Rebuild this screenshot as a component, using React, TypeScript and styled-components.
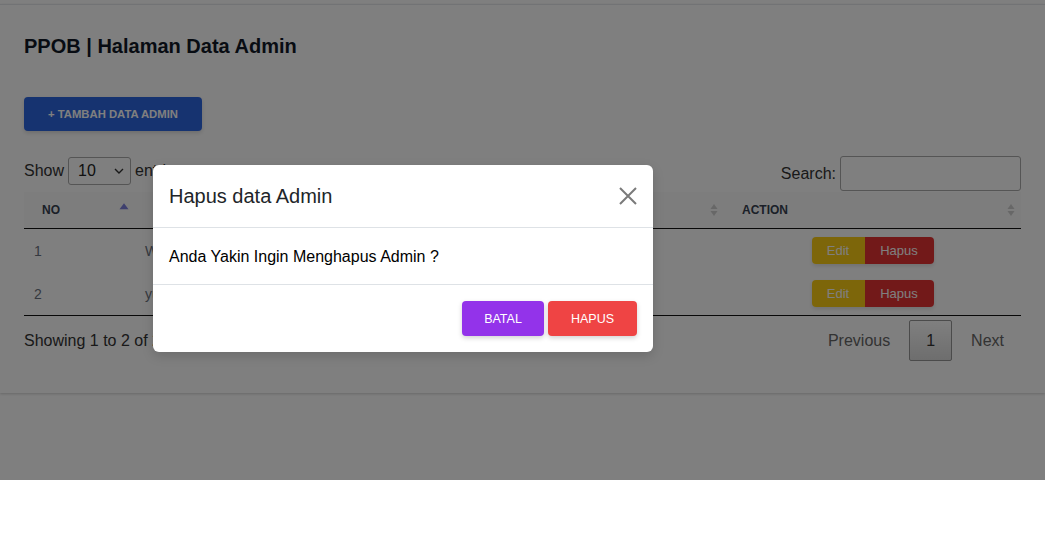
import React from "react";
import styled, { createGlobalStyle } from "styled-components";

const Global = createGlobalStyle`
  html, body { margin: 0; padding: 0; background: #ffffff; }
  body { font-family: "Liberation Sans", Arial, sans-serif; color: #333; }
  * { box-sizing: border-box; }
`;

const Page = styled.div`
  position: relative;
  height: 480px;
  overflow: hidden;
  padding-top: 4px;
`;

const Card = styled.section`
  background: #fff;
  border-top: 1px solid #e5e7eb;
  box-shadow: 0 1px 3px rgba(0, 0, 0, 0.12), 0 1px 2px rgba(0, 0, 0, 0.08);
  padding: 27px 24px 32px;
`;

const Title = styled.h1`
  margin: 0;
  font-size: 20px;
  line-height: 28px;
  font-weight: 700;
  color: #111827;
`;

const AddButton = styled.button`
  margin-top: 37px;
  width: 178px;
  height: 34px;
  padding: 0;
  border: none;
  border-radius: 4px;
  background: #2d66e0;
  color: #fff;
  font-family: "Liberation Sans", Arial, sans-serif;
  font-size: 11.3px;
  font-weight: 700;
  text-transform: uppercase;
  box-shadow: 0 2px 4px rgba(0, 0, 0, 0.15);
`;

const Controls = styled.div`
  margin-top: 25px;
  display: flex;
  justify-content: space-between;
  align-items: flex-start;
`;

const LengthLabel = styled.label`
  display: flex;
  align-items: center;
  gap: 4px;
  font-size: 16px;
  height: 29px;
  color: #333;
`;

const Select = styled.div`
  width: 63px;
  height: 28px;
  border: 1px solid #aaa;
  border-radius: 3px;
  display: flex;
  align-items: center;
  justify-content: space-between;
  padding: 0 6px 0 9px;
  font-size: 16px;
  color: #222;
`;

const SearchLabel = styled.label`
  display: flex;
  align-items: center;
  gap: 4px;
  font-size: 16px;
  color: #333;
  padding-top: 1px;
`;

const SearchInput = styled.input`
  width: 181px;
  height: 35px;
  margin-top: -1px;
  border: 1px solid #aaa;
  border-radius: 3px;
  background: transparent;
`;

const Table = styled.table`
  width: 100%;
  margin-top: 1px;
  border-collapse: collapse;
  table-layout: fixed;
`;

const Th = styled.th<{ $w?: number }>`
  position: relative;
  ${(p) => (p.$w ? `width: ${p.$w}px;` : "")}
  text-align: left;
  padding: 10px 18px;
  height: 36px;
  font-size: 12px;
  line-height: 16px;
  font-weight: 700;
  color: #374151;
  text-transform: uppercase;
  border-bottom: 1px solid #111;
  background: #fafafa;
`;

const SortIcon = styled.svg`
  position: absolute;
  right: 6px;
  top: 50%;
  transform: translateY(-50%);
`;

const Td = styled.td<{ $center?: boolean }>`
  padding: 8px 10px;
  height: 43px;
  font-size: 14px;
  color: #6b7280;
  text-align: ${(p) => (p.$center ? "center" : "left")};
`;

const Tr = styled.tr<{ $last?: boolean }>`
  ${(p) => (p.$last ? "border-bottom: 1px solid #111;" : "")}
`;

const Group = styled.div`
  display: inline-flex;
  border-radius: 4px;
  overflow: hidden;
  box-shadow: 0 2px 4px rgba(0, 0, 0, 0.12);
  vertical-align: middle;
`;

const GroupBtn = styled.span<{ $bg: string; $w: number }>`
  width: ${(p) => p.$w}px;
  height: 27px;
  line-height: 27px;
  text-align: center;
  background: ${(p) => p.$bg};
  color: #fff;
  font-size: 13px;
`;

const Footer = styled.div`
  margin-top: 4px;
  display: flex;
  justify-content: space-between;
  align-items: center;
`;

const Info = styled.div`
  font-size: 16px;
  color: #333;
`;

const Paginate = styled.div`
  display: flex;
  align-items: center;
  gap: 2px;
`;

const PageBtn = styled.span<{ $current?: boolean }>`
  padding: 8px 16px;
  line-height: 23px;
  font-size: 16px;
  border: 1px solid ${(p) => (p.$current ? "#979797" : "transparent")};
  border-radius: 2px;
  color: ${(p) => (p.$current ? "#333" : "#666")};
  background: ${(p) =>
    p.$current ? "linear-gradient(to bottom, #fff 0%, #dcdcdc 100%)" : "transparent"};
`;

const Backdrop = styled.div`
  position: absolute;
  inset: 0;
  background: rgba(0, 0, 0, 0.5);
`;

const Modal = styled.div`
  position: absolute;
  left: 153px;
  top: 165px;
  width: 500px;
  background: #fff;
  border-radius: 6px;
  box-shadow: 0 4px 12px rgba(0, 0, 0, 0.15);
`;

const ModalHeader = styled.div`
  display: flex;
  align-items: center;
  justify-content: space-between;
  padding: 16px 15px 16px 16px;
  border-bottom: 1px solid #dee2e6;
`;

const ModalTitle = styled.h5`
  margin: 0;
  font-size: 20px;
  line-height: 30px;
  font-weight: 400;
  color: #212529;
`;

const CloseBtn = styled.button`
  border: none;
  background: transparent;
  padding: 0;
  width: 20px;
  height: 20px;
  display: flex;
  align-items: center;
  justify-content: center;
`;

const ModalBody = styled.div`
  padding: 17px 16px 15px;
  font-size: 16px;
  line-height: 24px;
  color: #000;
  border-bottom: 1px solid #dee2e6;
`;

const ModalFooter = styled.div`
  display: flex;
  justify-content: flex-end;
  gap: 4px;
  padding: 16px;
`;

const ModalBtn = styled.button<{ $bg: string; $w: number }>`
  width: ${(p) => p.$w}px;
  height: 35px;
  border: none;
  border-radius: 4px;
  background: ${(p) => p.$bg};
  color: #fff;
  font-family: "Liberation Sans", Arial, sans-serif;
  font-size: 12.5px;
  text-transform: uppercase;
  box-shadow: 0 2px 5px rgba(0, 0, 0, 0.18);
`;

const SortBoth = () => (
  <SortIcon width="8" height="14" viewBox="0 0 8 14">
    <path d="M4 1 L7.5 6 H0.5 Z" fill="#cfcfcf" />
    <path d="M4 13 L7.5 8 H0.5 Z" fill="#cfcfcf" />
  </SortIcon>
);

const SortAsc = () => (
  <SortIcon width="10" height="14" viewBox="0 0 10 14" style={{ transform: "translateY(-70%)" }}>
    <path d="M5 3 L9.5 9 H0.5 Z" fill="#7c7fdc" />
  </SortIcon>
);

const rows = [
  { no: 1, nama: "Wahyu", user: "wahyu" },
  { no: 2, nama: "yusuf", user: "yusuf" },
];

export default function App() {
  return (
    <>
      <Global />
      <Page>
        <Card>
          <Title>PPOB | Halaman Data Admin</Title>
          <AddButton>+ Tambah Data Admin</AddButton>
          <Controls>
            <LengthLabel>
              Show
              <Select>
                <span>10</span>
                <svg width="10" height="6" viewBox="0 0 10 6">
                  <path d="M1 1 L5 5 L9 1" fill="none" stroke="#333" strokeWidth="1.4" />
                </svg>
              </Select>
              entries
            </LengthLabel>
            <SearchLabel>
              Search:
              <SearchInput />
            </SearchLabel>
          </Controls>
          <Table>
            <thead>
              <tr>
                <Th $w={111}>
                  No
                  <SortAsc />
                </Th>
                <Th $w={280}>
                  Nama
                  <SortBoth />
                </Th>
                <Th $w={309}>
                  Username
                  <SortBoth />
                </Th>
                <Th>
                  Action
                  <SortBoth />
                </Th>
              </tr>
            </thead>
            <tbody>
              {rows.map((r, i) => (
                <Tr key={r.no} $last={i === rows.length - 1}>
                  <Td>{r.no}</Td>
                  <Td>{r.nama}</Td>
                  <Td>{r.user}</Td>
                  <Td $center>
                    <Group>
                      <GroupBtn $bg="#facc15" $w={53}>Edit</GroupBtn>
                      <GroupBtn $bg="#e53333" $w={69}>Hapus</GroupBtn>
                    </Group>
                  </Td>
                </Tr>
              ))}
            </tbody>
          </Table>
          <Footer>
            <Info>Showing 1 to 2 of 2 entries</Info>
            <Paginate>
              <PageBtn>Previous</PageBtn>
              <PageBtn $current>1</PageBtn>
              <PageBtn>Next</PageBtn>
            </Paginate>
          </Footer>
        </Card>
        <Backdrop />
        <Modal>
          <ModalHeader>
            <ModalTitle>Hapus data Admin</ModalTitle>
            <CloseBtn aria-label="Close">
              <svg width="18" height="18" viewBox="0 0 18 18">
                <path d="M1 1 L17 17 M17 1 L1 17" stroke="#7a7a7a" strokeWidth="2" fill="none" />
              </svg>
            </CloseBtn>
          </ModalHeader>
          <ModalBody>Anda Yakin Ingin Menghapus Admin ?</ModalBody>
          <ModalFooter>
            <ModalBtn $bg="#9333ea" $w={82}>Batal</ModalBtn>
            <ModalBtn $bg="#ef4444" $w={89}>Hapus</ModalBtn>
          </ModalFooter>
        </Modal>
      </Page>
    </>
  );
}
